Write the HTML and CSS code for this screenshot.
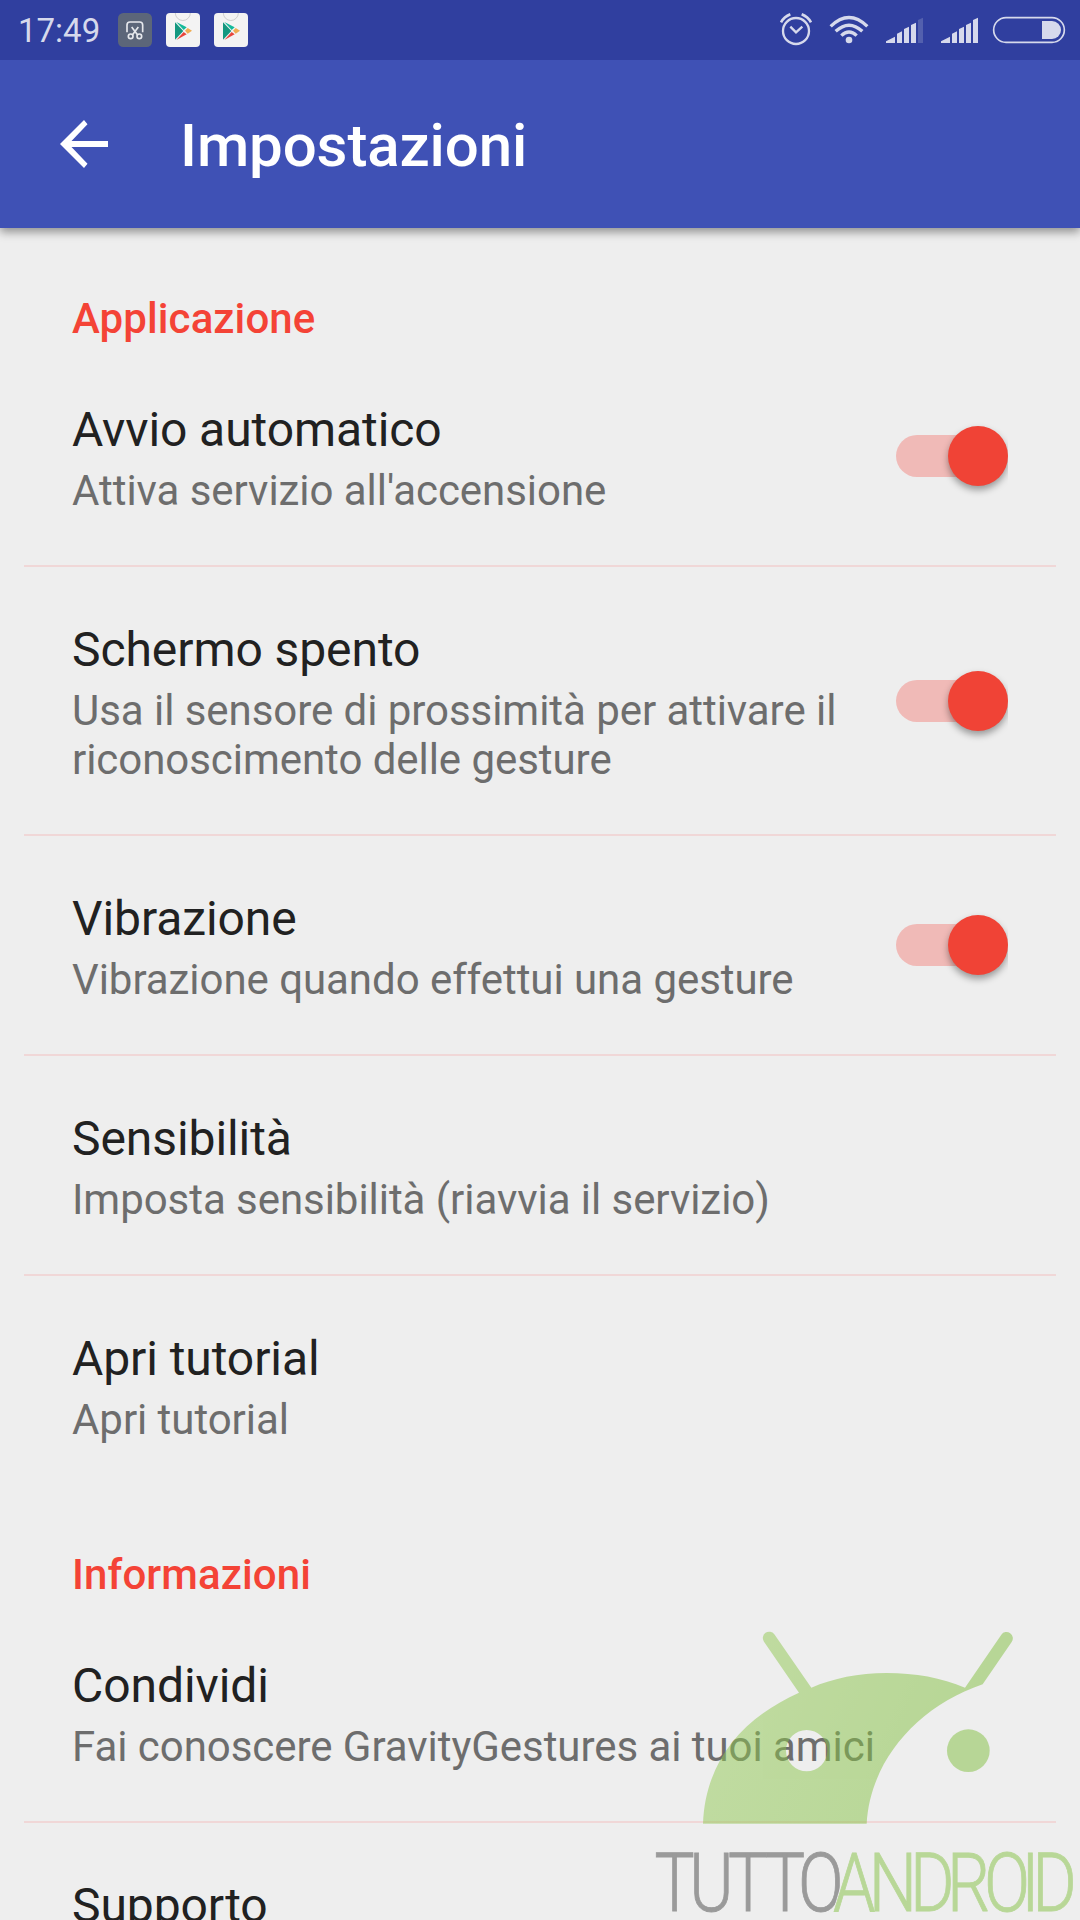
FILE: index.html
```html
<!DOCTYPE html>
<html lang="it">
<head>
<meta charset="utf-8">
<title>Impostazioni</title>
<link rel="stylesheet" href="styles.css">
</head>
<body>
<div class="screen">
  <div class="status">
    <span class="clock">17:49</span>
    <svg class="chip" width="34" height="34" viewBox="0 0 102 102">
      <rect width="102" height="102" rx="16" fill="#5c6679"/>
      <g fill="none" stroke="#e6e8ec" stroke-width="5">
        <path d="M27 58V36q0-9 9-9h29q9 0 9 9v22" />
        <path d="M41 42L59 66M61 42L43 66"/>
        <circle cx="38" cy="70" r="7"/><circle cx="64" cy="70" r="7"/>
      </g>
    </svg>
    <svg class="chip" width="34" height="34" viewBox="0 0 102 102">
      <rect width="102" height="102" rx="12" fill="#f3f3f3"/>
      <path d="M28 0a22 22 0 0 0 45 0" fill="none" stroke="#cfcfcf" stroke-width="3"/>
      <path d="M27 28V80L52 54z" fill="#14977f"/><path d="M31 27L62 43L53 51z" fill="#12b999"/>
      <path d="M31 81L62 64L53 57z" fill="#e8453c"/><path d="M57 53L65 45L78 53L65 62z" fill="#efad52"/>
    </svg>
    <svg class="chip" width="34" height="34" viewBox="0 0 102 102">
      <rect width="102" height="102" rx="12" fill="#f3f3f3"/>
      <path d="M28 0a22 22 0 0 0 45 0" fill="none" stroke="#cfcfcf" stroke-width="3"/>
      <path d="M27 28V80L52 54z" fill="#14977f"/><path d="M31 27L62 43L53 51z" fill="#12b999"/>
      <path d="M31 81L62 64L53 57z" fill="#e8453c"/><path d="M57 53L65 45L78 53L65 62z" fill="#efad52"/>
    </svg>
    <svg class="indicators" width="320" height="60" viewBox="0 0 960 180">
      <g fill="none" stroke="#d6d9ec">
        <circle cx="108" cy="93" r="39" stroke-width="7"/>
        <path d="M91 80L108 97L127 80" stroke-width="7"/>
        <path d="M63 67Q72 51 91 43M153 67Q144 51 125 43" stroke-width="8"/>
        <path d="M212 79Q267 26 322 79" stroke-width="10"/>
        <path d="M227 94Q267 57 307 94" stroke-width="10"/>
        <path d="M244 107Q267 85 290 107" stroke-width="10"/>
        <rect x="701" y="53" width="212" height="74" rx="37" stroke-width="5"/>
      </g>
      <g fill="#d6d9ec">
        <circle cx="267" cy="120" r="10"/>
        <path d="M378 129V124L405 110V129zM411 129V101L426 94V129zM432 129V87L447 80V129zM453 129V75L468 68V129z"/>
        <path d="M543 129V124L570 110V129zM576 129V101L591 94V129zM597 129V87L612 80V129zM618 129V75L633 68V129zM639 129V60L654 53V129z"/>
        <path d="M846 63H876A27 27 0 0 1 876 117H846z"/>
      </g>
      <path d="M474 129V60L489 53V129z" fill="#5360ae"/>
    </svg>
  </div>
  <header class="toolbar">
    <svg width="48" height="48" viewBox="0 0 48 48"><path d="M48 21H11.5L27.5 4.2L24 0L0 24L24 48L27.5 43.8L11.5 27H48z" fill="#fff"/></svg>
    <h1>Impostazioni</h1>
  </header>
  <main>
    <h2>Applicazione</h2>
    <div class="row">
      <div class="text"><div class="title">Avvio automatico</div><div class="summary">Attiva servizio all'accensione</div></div>
      <div class="switch"><span class="thumb"></span></div>
    </div>
    <div class="row">
      <div class="text"><div class="title">Schermo spento</div><div class="summary">Usa il sensore di prossimità per attivare il<br>riconoscimento delle gesture</div></div>
      <div class="switch"><span class="thumb"></span></div>
    </div>
    <div class="row">
      <div class="text"><div class="title">Vibrazione</div><div class="summary">Vibrazione quando effettui una gesture</div></div>
      <div class="switch"><span class="thumb"></span></div>
    </div>
    <div class="row">
      <div class="text"><div class="title">Sensibilità</div><div class="summary">Imposta sensibilità (riavvia il servizio)</div></div>
    </div>
    <div class="row last">
      <div class="text"><div class="title">Apri tutorial</div><div class="summary">Apri tutorial</div></div>
    </div>
    <h2 class="second">Informazioni</h2>
    <div class="row">
      <div class="text"><div class="title">Condividi</div><div class="summary">Fai conoscere GravityGestures ai tuoi amici</div></div>
    </div>
    <div class="row">
      <div class="text"><div class="title">Supporto</div></div>
    </div>
  </main>
  <svg class="watermark" width="440" height="310" viewBox="0 0 1320 930">
    <defs>
      <linearGradient id="green" gradientUnits="userSpaceOnUse" x1="200" y1="200" x2="900" y2="500">
        <stop offset="0" stop-color="#94ca56"/><stop offset="1" stop-color="#82c040"/>
      </linearGradient>
      <clipPath id="cut"><path d="M0 650H655L577 910H0z"/></clipPath>
    </defs>
    <g fill="url(#green)" opacity=".5">
      <path fill-rule="evenodd" d="M189 641C196 455 305 326 477 248L372 95A19 19 0 0 1 403 73L514 233C580 205 655 189 740 189C825 189 905 203 975 233L1084 74A19 19 0 0 1 1115 96L1028 223C830 290 690 455 680 641zM562 422a62 62 0 1 0-124 0a62 62 0 1 0 124 0z"/>
      <circle cx="985" cy="422" r="64"/>
    </g>
    <g class="brand" opacity=".5">
      <g clip-path="url(#cut)"><text transform="scale(.83 1)" y="903" x="52 178 318 452 571" fill="#484848" stroke="#484848">TUTTO</text></g>
      <text transform="scale(.84 1)" y="903" x="689 817 964 1096 1229 1362 1401" fill="#84c242" stroke="#84c242">ANDROID</text>
    </g>
  </svg>
</div>
</body>
</html>
```
FILE: styles.css
```css
* { box-sizing: border-box; }
body { margin: 0; font-family: Roboto, "Noto Sans", sans-serif; }
.screen { position: relative; width: 1080px; height: 1920px; overflow: hidden; background: #eee; }
.status { display: flex; align-items: center; height: 60px; padding-left: 18px; background: #303f9f; position: relative; z-index: 1; }
.clock { width: 100px; font-size: 33px; line-height: 60px; color: #d6d9ec; padding-top: 2px; white-space: nowrap; }
.chip { margin-right: 14px; }
.indicators { margin-left: auto; }
.toolbar { display: flex; align-items: center; height: 168px; padding: 0 60px; gap: 72px; background: #3f51b5; box-shadow: 0 4px 9px rgba(0, 0, 0, .4); }
h1 { margin: 4px 0 0; font-size: 60px; line-height: 70px; font-weight: 500; letter-spacing: -.1px; color: #fff; }
main { padding-top: 66px; }
h2 { margin: 0 0 4px; padding-left: 72px; font-size: 42px; line-height: 49px; font-weight: 500; letter-spacing: .1px; color: #f44336; }
.second { margin-top: 56px; }
.row { display: flex; align-items: center; justify-content: space-between; margin: 0 24px; padding: 54px 48px 50px; border-bottom: 2px solid #f0d7d7; }
.last { border-bottom: 0; }
.title { font-size: 48px; line-height: 57px; letter-spacing: -.08px; color: #212121; }
.summary { margin-top: 8px; font-size: 42px; line-height: 49px; letter-spacing: -.05px; color: #6d6d6d; white-space: nowrap; }
.switch { position: relative; flex: none; width: 112px; height: 42px; margin-top: -4px; border-radius: 21px 0 0 21px; background: linear-gradient(to right, #f0bab7 85px, transparent 85px); clip-path: inset(-20px 0 -25px 0); }
.thumb { position: absolute; left: 52px; top: -9px; width: 60px; height: 60px; border-radius: 50%; background: #f04336; box-shadow: 0 4px 7px rgba(0, 0, 0, .36); }
.watermark { position: absolute; left: 640px; top: 1610px; }
.brand text { font-family: Roboto, sans-serif; font-weight: 300; font-size: 243px; stroke-width: 2.5px; }
```
